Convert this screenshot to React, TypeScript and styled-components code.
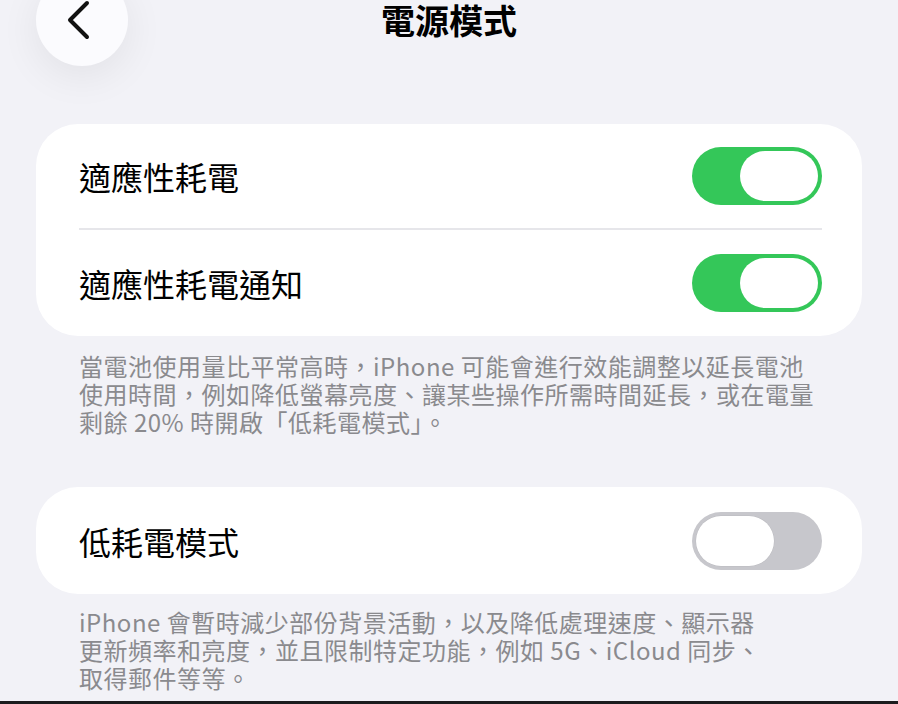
import React, { useState } from 'react';
import styled, { createGlobalStyle } from 'styled-components';

const GlobalStyle = createGlobalStyle`
  html, body {
    margin: 0;
    padding: 0;
    background: #f2f2f7;
  }
  body {
    font-family: "Noto Sans CJK TC", "Noto Sans", "Liberation Sans", sans-serif;
    -webkit-font-smoothing: antialiased;
  }
`;

const Screen = styled.div`
  height: 704px;
  display: flex;
  flex-direction: column;
  overflow: hidden;
`;

const Content = styled.div`
  flex: 1;
  overflow: hidden;
  padding: 0 36px;
`;

const BottomEdge = styled.div`
  height: 3px;
  background: #1c1c1e;
`;

const Header = styled.header`
  display: grid;
  grid-template-columns: 92px 1fr 92px;
  align-items: center;
  height: 92px;
  margin-top: -26px;
`;

const BackButton = styled.button`
  width: 92px;
  height: 92px;
  border-radius: 50%;
  border: none;
  background: #fbfbfe;
  box-shadow: 0 10px 40px rgba(0, 0, 0, 0.07);
  display: flex;
  align-items: center;
  justify-content: center;
  padding: 0;
  svg {
    margin-right: 6px;
    margin-top: 0px;
  }
`;

const Title = styled.h1`
  margin: 0;
  text-align: center;
  font-size: 34px;
  font-weight: 700;
  color: #000;
  line-height: 1;
`;

const Card = styled.section<{ $top: number }>`
  margin-top: ${({ $top }) => $top}px;
  background: #fff;
  border-radius: 42px;
  padding: 0 40px 0 43px;
`;

const Row = styled.div<{ $height: number }>`
  display: flex;
  align-items: center;
  justify-content: space-between;
  height: ${({ $height }) => $height}px;
`;

const Divider = styled.div`
  height: 2px;
  background: #e6e6ea;
`;

const Label = styled.span`
  font-size: 32px;
  color: #000;
  line-height: 1;
`;

const Track = styled.button<{ $on: boolean }>`
  position: relative;
  width: 130px;
  height: 58px;
  border-radius: 29px;
  border: none;
  padding: 0;
  cursor: pointer;
  background: ${({ $on }) => ($on ? '#34c759' : '#c7c7cc')};
`;

const Knob = styled.span<{ $on: boolean }>`
  position: absolute;
  top: 4px;
  left: ${({ $on }) => ($on ? '48px' : '4px')};
  width: 78px;
  height: 50px;
  border-radius: 25px;
  background: #fff;
  box-shadow: ${({ $on }) => ($on ? 'none' : '0 0 0 0.5px rgba(0,0,0,0.06)')};
`;

const Footer = styled.p<{ $top: number }>`
  margin: 0;
  padding: ${({ $top }) => $top}px 40px 0 43px;
  font-size: 24px;
  line-height: 28px;
  letter-spacing: 0.5px;
  color: #8a8a8e;
`;

const Toggle = ({ initial }: { initial: boolean }) => {
  const [on, setOn] = useState(initial);
  return (
    <Track $on={on} onClick={() => setOn(!on)}>
      <Knob $on={on} />
    </Track>
  );
};

const App = () => {
  return (
    <>
      <GlobalStyle />
      <Screen>
        <Content>
          <Header>
            <BackButton aria-label="返回">
              <svg width="26" height="40" viewBox="0 0 26 40">
                <polyline
                  points="21,3 4,20 21,37"
                  fill="none"
                  stroke="#111"
                  strokeWidth="4"
                  strokeLinecap="round"
                  strokeLinejoin="round"
                />
              </svg>
            </BackButton>
            <Title>電源模式</Title>
            <span />
          </Header>

          <Card $top={58}>
            <Row $height={104}>
              <Label>適應性耗電</Label>
              <Toggle initial={true} />
            </Row>
            <Divider />
            <Row $height={106}>
              <Label>適應性耗電通知</Label>
              <Toggle initial={true} />
            </Row>
          </Card>
          <Footer $top={16}>
            當電池使用量比平常高時，iPhone 可能會進行效能調整以延長電池
            <br />
            使用時間，例如降低螢幕亮度、讓某些操作所需時間延長，或在電量
            <br />
            剩餘 20% 時開啟「低耗電模式」。
          </Footer>

          <Card $top={51}>
            <Row $height={107}>
              <Label>低耗電模式</Label>
              <Toggle initial={false} />
            </Row>
          </Card>
          <Footer $top={14}>
            iPhone 會暫時減少部份背景活動，以及降低處理速度、顯示器
            <br />
            更新頻率和亮度，並且限制特定功能，例如 5G、iCloud 同步、
            <br />
            取得郵件等等。
          </Footer>
        </Content>
        <BottomEdge />
      </Screen>
    </>
  );
};

export default App;
